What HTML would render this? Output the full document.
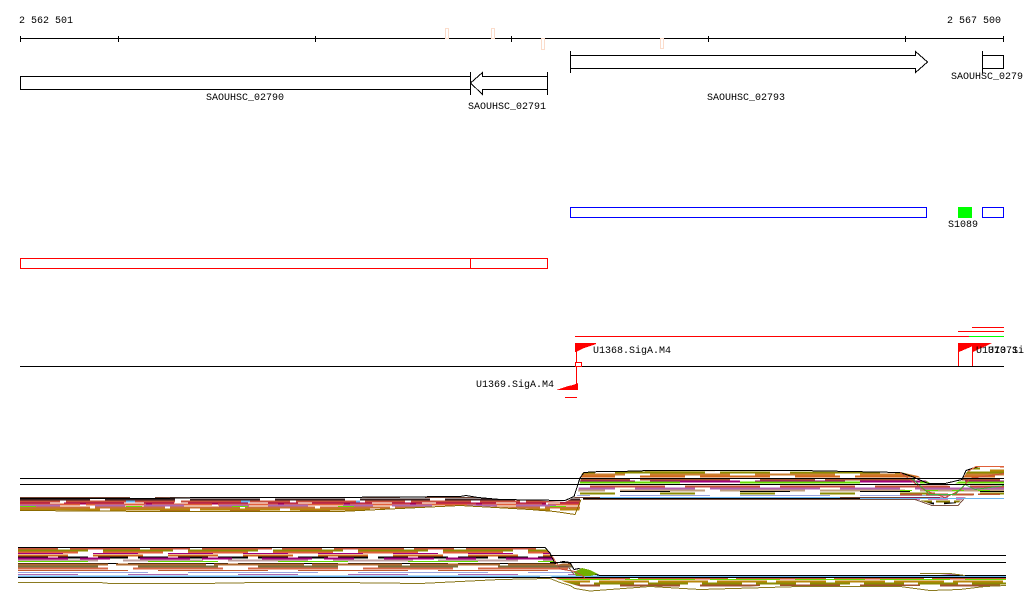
<!DOCTYPE html>
<html><head><meta charset="utf-8"><style>
html,body{margin:0;padding:0;background:#fff;width:1024px;height:611px;overflow:hidden}
svg{display:block}
text{font-family:"Liberation Mono",monospace;font-size:10px;fill:#000}
</style></head><body>
<svg width="1024" height="611" viewBox="0 0 1024 611" xmlns="http://www.w3.org/2000/svg" shape-rendering="crispEdges">
<defs>
<clipPath id="c1"><polygon points="20,497 160,497 340,498 460,496 500,499 530,500 565,502 577,496 582,473 600,471 900,472 918,476 930,483 950,486 962,480 968,470 980,466 1004,466 1004,495 975,495 965,497 958,503 935,505 915,499 600,499 583,499 578,514 550,513 530,509 460,505 340,512 160,511 20,510"/></clipPath>
<clipPath id="c2"><polygon points="18,547 545,547 550,553 556,565 570,562 576,571 582,568 590,572 600,575 940,575 960,573 985,575 1006,576 1006,586 985,588 960,590 920,586 760,586 700,589 650,586 590,589 575,585 565,582 550,576 300,579 18,579"/></clipPath>
</defs>

<!-- axis -->
<g fill="none" stroke="#000">
<path d="M20 38.500H1004M20.500 36V42M118.500 36V42M315.500 36V42M511.500 36V42M708.500 36V42M905.500 36V42M1003.500 36V42"/>
</g>
<g fill="#fff" stroke="#fbdccb">
<rect x="445.500" y="28.500" width="3" height="10"/>
<rect x="491.500" y="28.500" width="3" height="10"/>
<rect x="541.500" y="38.500" width="3" height="11"/>
<rect x="660.500" y="38.500" width="3" height="10"/>
</g>
<text x="19" y="23">2 562 501</text>
<text x="947" y="23">2 567 500</text>

<!-- genes -->
<g fill="#fff" stroke="#000">
<rect x="20.500" y="76.500" width="450" height="13"/>
<path d="M547.500 72V95M547.500 76.500H482.500V72.500L470.500 83L482.500 94.500V89.500H547.500M470.500 72V95"/>
<path d="M570.500 51V73M570.500 55.500H915.500V51.500L927.500 62L915.500 72.500V68.500H570.500Z"/>
<rect x="982.500" y="55.500" width="21" height="13"/>
<path d="M982.500 51V73"/>
</g>
<text x="206" y="100">SAOUHSC_02790</text>
<text x="468" y="109">SAOUHSC_02791</text>
<text x="707" y="100">SAOUHSC_02793</text>
<text x="951" y="79">SAOUHSC_0279</text>

<!-- blue / green / red boxes -->
<rect x="570.500" y="207.500" width="356" height="10" fill="none" stroke="#00f"/>
<rect x="958" y="207" width="14" height="11" fill="#0f0"/>
<rect x="982.500" y="207.500" width="21" height="10" fill="none" stroke="#00f"/>
<text x="948" y="227">S1089</text>
<rect x="20.500" y="258.500" width="527" height="10" fill="none" stroke="#f00"/>
<path d="M470.500 258V268" stroke="#f00"/>

<!-- TSS tracks -->
<path d="M972 327.500H1004M958 331.500H1004M575 336.500H969" stroke="#f00"/>
<path d="M969 336.500H1004" stroke="#0f0"/>
<path d="M20 366.500H1004" stroke="#000"/>
<g stroke="#f00" fill="#f00">
<path d="M576.500 343V390" fill="none"/>
<path d="M958.500 343V366M972.500 343V366" fill="none"/>
<polygon points="575,343 596,343 596,344 590,346 584,348 580,350 576,352 575,352" stroke="none"/>
<polygon points="958,343 979,343 973,346 966,349 959,352 958,352" stroke="none"/>
<polygon points="972,343 992,343 986,346 979,349 973,352 972,352" stroke="none"/>
<polygon points="578,383 578,390 556,390 562,388 568,386 573,385" stroke="none"/>
<rect x="575.500" y="362.500" width="6" height="4" fill="#fff"/>
<path d="M565 397.500H577" fill="none"/>
</g>
<text x="593" y="353">U1368.SigA.M4</text>
<text x="476" y="387">U1369.SigA.M4</text>
<text x="976" y="353">U1370.SigA.M4</text>
<text x="988" y="353">U1371.SigA.M4</text>

<!-- expression band 1 -->
<g clip-path="url(#c1)" fill="none" stroke-width="2">
<path d="M20 466.500H1004" stroke="#c8552d" stroke-dasharray="40 20 30 50"/>
<path d="M20 468.500H1004" stroke="#8b8b00" stroke-dasharray="60 30"/>
<path d="M20 470.500H1004" stroke="#b8860b" stroke-dasharray="70 25 20 10"/>
<path d="M20 472.500H1004" stroke="#8b8b00" stroke-dasharray="50 20 90 15"/>
<path d="M20 474.500H1004" stroke="#cd7f32" stroke-dasharray="80 25"/>
<path d="M20 476.500H1004" stroke="#d2691e" stroke-dasharray="45 15 70 25"/>
<path d="M20 479.500H1004" stroke="#a0522d" stroke-dasharray="55 10 90 30"/>
<path d="M20 481.500H1004" stroke="#a0007a" stroke-dasharray="90 15"/>
<path d="M20 482.500H1004" stroke="#66dd00" stroke-dasharray="120 60"/>
<path d="M20 486.500H1004" stroke="#c8503c" stroke-dasharray="75 20"/>
<path d="M20 488.500H1004" stroke="#b060b0" stroke-dasharray="60 15 110 20"/>
<path d="M20 490.500H1004" stroke="#c0a080" stroke-dasharray="85 15"/>
<path d="M20 491.500H1004" stroke="#000" stroke-dasharray="50 70" stroke-width="1"/>
<path d="M20 493.500H1004" stroke="#8b8b00" stroke-dasharray="35 45"/>
<path d="M20 495.500H1004" stroke="#9aa5e0" stroke-dasharray="90 30" stroke-width="1"/>
<path d="M20 497.500H1004" stroke="#704030" stroke-dasharray="110 25" stroke-width="1"/>
<path d="M20 499.500H580" stroke="#3a2020" stroke-dasharray="70 15"/>
<path d="M20 501.500H580" stroke="#6cb4ee" stroke-dasharray="20 60 45 90"/>
<path d="M20 501.500H580" stroke="#c8503c" stroke-dasharray="40 6 60 9"/>
<path d="M20 503.500H580" stroke="#a8004e" stroke-dasharray="30 14 60 20"/>
<path d="M20 504.500H580" stroke="#e0603a" stroke-dasharray="60 6"/>
<path d="M20 505.500H580" stroke="#b06ab0" stroke-dasharray="40 35 30 19"/>
<path d="M20 507.500H580" stroke="#c87038" stroke-dasharray="70 5"/>
<path d="M20 506.500H580" stroke="#66dd00" stroke-dasharray="16 90" stroke-width="1"/>
<path d="M20 509.500H580" stroke="#b8860b" stroke-dasharray="80 10"/>
<path d="M20 511.500H580" stroke="#a0522d" stroke-dasharray="30 40"/>
<path d="M900 490.500H1004" stroke="#66dd00" stroke-dasharray="12 14" stroke-width="1"/>
<path d="M900 494.500H1004" stroke="#c05a30" stroke-dasharray="22 4"/>
<path d="M900 498.500H1004" stroke="#a0007a" stroke-dasharray="20 8"/>
<path d="M900 501.500H1004" stroke="#8b7a00" stroke-dasharray="14 4"/>
<path d="M900 503.500H1004" stroke="#000" stroke-dasharray="12 10"/>
</g>
<g fill="none">
<path d="M20 498.500H160L200 497.500H330L460 496.500L466 495.500L478 497.500L500 499.500L565 500.500L574 496.500L580 478L584 472.500L600 471.500H620L650 470.500H800L900 472.500L912 476.500L928 483.500H945L962 479.500L966 470.500L978 466.500H1003" stroke="#000"/>
<path d="M20 510.500L160 511.500L340 511.500L460 505.500L530 509.500L555 511.500L575 514.500L581 499.500" stroke="#8b6a00"/>
<path d="M583 499.500H915L932 505.500H958L965 497.500" stroke="#7b5040"/>
<path d="M583 498.500H1004" stroke="#000"/>
<path d="M600 497.500H840" stroke="#6cb4ee"/>
<path d="M860 498.500H1004" stroke="#6cb4ee"/>
<path d="M900 472.500L925 490.500L945 497.500L960 490.500L970 478.500L1004 473.500" stroke="#c8503c"/>
<path d="M912 478.500L930 494.500H955L965 484.500L975 489.500L1004 485.500" stroke="#40b040"/>
<path d="M968 471.500L976 466.500H1004" stroke="#e0603a"/>
</g>
<path d="M20 478.500H1004M20 484.500H1004" stroke="#000" fill="none"/>

<!-- expression band 2 -->
<g clip-path="url(#c2)" fill="none" stroke-width="2">
<path d="M18 548.500H1006" stroke="#c8503c" stroke-dasharray="40 12 70 10"/>
<path d="M18 550.500H1006" stroke="#8b8b00" stroke-dasharray="70 15"/>
<path d="M18 552.500H1006" stroke="#e0603a" stroke-dasharray="60 25"/>
<path d="M18 553.500H1006" stroke="#a0007a" stroke-dasharray="45 30" stroke-width="1"/>
<path d="M18 555.500H1006" stroke="#d2691e" stroke-dasharray="50 25"/>
<path d="M18 557.500H1006" stroke="#000" stroke-dasharray="30 10"/>
<path d="M18 558.500H1006" stroke="#a0007a" stroke-dasharray="50 12 30 30"/>
<path d="M18 560.500H1006" stroke="#c0a0a0" stroke-dasharray="80 25"/>
<path d="M18 561.500H1006" stroke="#66dd00" stroke-dasharray="70 60" stroke-width="1"/>
<path d="M18 563.500H1006" stroke="#000" stroke-dasharray="100 10" stroke-width="1"/>
<path d="M18 564.500H1006" stroke="#b06a30" stroke-dasharray="90 8"/>
<path d="M18 566.500H1006" stroke="#7a7040" stroke-dasharray="80 40"/>
<path d="M18 568.500H1006" stroke="#d8694a" stroke-dasharray="90 25"/>
<path d="M18 570.500H1006" stroke="#c05a30" stroke-dasharray="110 30" stroke-width="1"/>
<path d="M18 572.500H1006" stroke="#9aa5e0" stroke-dasharray="130 40" stroke-width="1"/>
<path d="M18 574.500H1006" stroke="#b06ab0" stroke-dasharray="60 50" stroke-width="1"/>
<path d="M18 576.500H1006" stroke="#6cb4ee"/>
<path d="M540 578.500H1006" stroke="#d05a35" stroke-dasharray="90 8"/>
<path d="M540 579.500H1006" stroke="#66dd00" stroke-dasharray="70 15" stroke-width="1"/>
<path d="M540 581.500H1006" stroke="#b8860b" stroke-dasharray="50 9"/>
<path d="M540 583.500H1006" stroke="#8b8b00" stroke-dasharray="40 14"/>
<path d="M540 585.500H1006" stroke="#a0522d" stroke-dasharray="60 20"/>
</g>
<g fill="none">
<path d="M18 547.500H545L550 553L555 563.500L563 561.500L570 562.500L574 569.500L579 568.500L585 571.500L600 575.500H1006" stroke="#000"/>
<path d="M18 582.500H100L110 583.500H200L260 582.500H340L420 583.500L500 579.500L550 578.500L560 582.500L570 585.500L575 588.500L590 591L650 586.500L700 589.500L800 586.500H900L930 590.500L960 589.500L985 586.500L1006 585.500" stroke="#8b7a20"/>
<path d="M18 577.500H1006" stroke="#000"/>
<path d="M18 576.500H540" stroke="#6cb4ee"/>
<polygon points="574,572 582,568 590,570 598,574 590,576 576,576" fill="#70b000" stroke="none"/>
<path d="M552 556L560 569L575 571.500L585 577.500" stroke="#c8503c"/>
<path d="M558 566.500H568L574 574.500" stroke="#7b5040"/>
<path d="M920 573.500H950L965 575.500" stroke="#8b7a20"/>
</g>
<path d="M550 555.500H1006M550 562.500H1006" stroke="#000" fill="none"/>
</svg>
</body></html>
